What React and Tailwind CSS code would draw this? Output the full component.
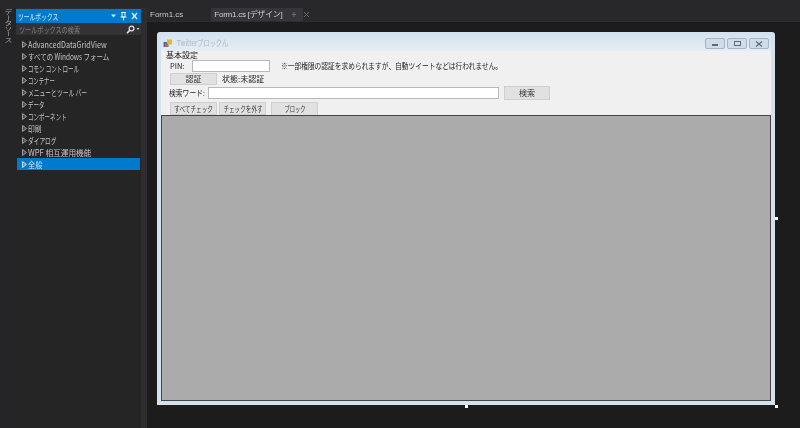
import React from 'react';

// the screenshot's UI font has narrow kana and full width kanji, so each label is squeezed on its own
const toolboxItems = [
  { label: 'AdvancedDataGridView', className: 'scale-x-[0.85]' },
  { label: 'すべての Windows フォーム', className: 'scale-x-[0.76]' },
  { label: 'コモン コントロール', className: 'scale-x-[0.65]' },
  { label: 'コンテナー', className: 'scale-x-[0.63]' },
  { label: 'メニューとツール バー', className: 'scale-x-[0.68]' },
  { label: 'データ', className: 'scale-x-[0.64]' },
  { label: 'コンポーネント', className: 'scale-x-[0.65]' },
  { label: '印刷', className: 'scale-x-[0.8]' },
  { label: 'ダイアログ', className: 'scale-x-[0.67]' },
  { label: 'WPF 相互運用機能', className: 'scale-x-[0.9]' },
];

const Arrow = ({ color = '#9c9c9c' }) => (
  <svg width="5" height="7" viewBox="0 0 5 7" className="shrink-0">
    <path d="M0.5 0.5 L4.5 3.5 L0.5 6.5 Z" fill={color} fillOpacity="0.35" stroke={color} strokeWidth="1" />
  </svg>
);

const ToolboxRow = ({ label, className, selected }) => (
  <div className={`flex h-3 items-center gap-[1px] pl-[5px] ${selected ? 'bg-[#007acc] text-[#cfe6f6]' : 'text-[#c4c4c4]'}`}>
    <Arrow color={selected ? '#bfe0f5' : '#9c9c9c'} />
    <span className={`origin-left whitespace-nowrap text-[8.5px] leading-3 ${className}`}>{label}</span>
  </div>
);

const Toolbox = () => (
  <div className="mt-[1px] flex w-[125px] shrink-0 flex-col">
    <div className="flex h-[14px] items-center bg-[#007acc] pl-[2px] pr-[3px] text-[#dcecf8]">
      <span className="flex-1 origin-left scale-x-[0.68] whitespace-nowrap text-[8.5px]">ツールボックス</span>
      <svg width="27" height="10" viewBox="0 0 27 10">
        <path d="M0 3.5 L5 3.5 L2.5 6.5 Z" fill="#dcecf8" />
        <path d="M10 1.5 H15 M11 1.5 V6 H14 V1.5 M9.5 6 H15.5 M12.5 6 V9.5" stroke="#e8f3fb" strokeWidth="1" fill="none" />
        <path d="M21 2 L26 8 M26 2 L21 8" stroke="#e8f3fb" strokeWidth="1.3" />
      </svg>
    </div>
    <div className="flex h-[12px] items-center justify-between bg-[#333337] pl-[3px] pr-[1px] text-[#808084]">
      <span className="origin-left scale-x-[0.72] whitespace-nowrap text-[8.5px]">ツールボックスの検索</span>
      <svg width="14" height="9" viewBox="0 0 14 9" className="shrink-0">
        <circle cx="5.5" cy="3.5" r="2.4" fill="none" stroke="#e4e4e4" strokeWidth="1.2" />
        <path d="M3.8 5.2 L1 8.2" stroke="#e4e4e4" strokeWidth="1.5" />
        <path d="M10.5 3 H13.5 L12 5 Z" fill="#d0d0d0" />
      </svg>
    </div>
    <div className="flex flex-1 flex-col bg-[#252526] pt-[3px]">
      <div className="flex flex-col px-[1px]">
        {toolboxItems.map((item) => (
          <ToolboxRow key={item.label} label={item.label} className={item.className} />
        ))}
        <ToolboxRow label="全般" className="scale-x-[0.85]" selected />
      </div>
    </div>
  </div>
);

const WinButton = ({ children }) => (
  <button className="flex h-[11px] w-[20px] items-center justify-center rounded-[2px] border border-[#a3b6c6] bg-[#d0dde9]">
    {children}
  </button>
);

const FormButton = ({ label, className = '', squeeze = '' }) => (
  <button className={`flex items-center justify-center border border-[#cfcfcf] bg-[#e1e1e1] text-[#333] ${className}`}>
    <span className={`whitespace-nowrap text-[8px] leading-[10px] ${squeeze}`}>{label}</span>
  </button>
);

const DesignerForm = () => (
  <div className="relative flex h-[373px] w-[618px] flex-col rounded-t-[3px] bg-[#d5e2ee] px-[4px] pb-[4px]">
    <div className="flex h-[19px] shrink-0 items-start bg-gradient-to-b from-[#d3e1ee] to-[#e6edf3] pl-[2px] pr-[2px] pt-[6px]">
      <svg width="10" height="9" viewBox="0 0 10 9" className="mt-[1px] shrink-0">
        <rect x="0.5" y="3" width="5" height="5" fill="#3f6fb5" />
        <rect x="4" y="0.5" width="5" height="5" fill="#e8b52e" />
        <rect x="2" y="5" width="3" height="3" fill="#d8622a" />
      </svg>
      <span className="ml-[4px] flex-1 origin-left scale-x-[0.77] whitespace-nowrap text-[8px] leading-[10px] text-[#a9b7c4]">Twitterブロックん</span>
      <div className="flex gap-[2px]">
        <WinButton><span className="mt-[2px] h-[2px] w-[6px] bg-[#5b6b78]" /></WinButton>
        <WinButton><span className="h-[5px] w-[7px] border border-[#5b6b78]" /></WinButton>
        <WinButton>
          <svg width="8" height="6" viewBox="0 0 8 6"><path d="M1 0.5 L7 5.5 M7 0.5 L1 5.5" stroke="#5b6b78" strokeWidth="1.2" /></svg>
        </WinButton>
      </div>
    </div>

    <div className="flex min-h-0 flex-1 flex-col bg-[#f0f0f0] text-[8px] text-[#222]">
      <div className="h-[9px] pl-[5px] leading-[8px]">基本設定</div>
      <div className="flex h-[12px] items-center pl-[9px]">
        <span className="w-[22px] text-[7.5px]">PIN:</span>
        <div className="h-[12px] w-[78px] shrink-0 border border-[#b8b8b8] bg-white" />
        <span className="ml-[11px] origin-left scale-x-[0.84] whitespace-nowrap">※一部権限の認証を求められますが、自動ツイートなどは行われません。</span>
      </div>
      <div className="mt-[1px] flex h-[12px] items-center pl-[9px]">
        <FormButton label="認証" className="h-[12px] w-[47px]" />
        <span className="ml-[5px] whitespace-nowrap">状態:未認証</span>
      </div>
      <div className="mt-[1px] flex h-[14px] items-center pl-[8px]">
        <span className="w-[39px] origin-left scale-x-[0.85] whitespace-nowrap">検索ワード:</span>
        <div className="h-[12px] w-[291px] border border-[#b8b8b8] bg-white" />
        <FormButton label="検索" className="ml-[5px] h-[14px] w-[46px]" />
      </div>
      <div className="mt-[2px] flex h-[13px] items-start pl-[9px]">
        <FormButton label="すべてチェック" squeeze="scale-x-[0.7]" className="h-[13px] w-[47px]" />
        <FormButton label="チェックを外す" squeeze="scale-x-[0.7]" className="ml-[2px] h-[13px] w-[47px]" />
        <FormButton label="ブロック" squeeze="scale-x-[0.66]" className="ml-[5px] h-[14px] w-[47px]" />
      </div>
      <div className="min-h-0 flex-1 border border-[#444] bg-[#ababab]" />
    </div>

    <span className="absolute right-[-3px] top-[185px] h-[3px] w-[3px] bg-white" />
    <span className="absolute bottom-[-3px] left-[308px] h-[3px] w-[3px] bg-white" />
    <span className="absolute bottom-[-3px] right-[-3px] h-[3px] w-[3px] bg-white" />
  </div>
);

export default function App() {
  return (
    <div
      className="flex h-[428px] w-[800px] flex-col overflow-hidden bg-[#2d2d30] blur-[0.4px]"
      style={{ fontFamily: '"Noto Sans CJK JP", "Noto Sans", sans-serif' }}
    >
      <div className="h-[8px] shrink-0 bg-[#28282b]" />
      <div className="flex min-h-0 flex-1">
        {/* side strip */}
        <div className="flex w-[16px] shrink-0 flex-col items-center bg-[#252528] pt-[1px]">
          <span className="origin-top scale-y-[0.7] text-[8px] leading-[10px] text-[#a0a0a0] [writing-mode:vertical-rl]">データソース</span>
        </div>
        <Toolbox />
        <div className="w-[6px] shrink-0 bg-[#2d2d30]" />

        {/* designer area */}
        <div className="flex min-w-0 flex-1 flex-col">
          <div className="flex h-[13px] shrink-0 items-center bg-[#28282b] text-[8px] [font-family:'Liberation_Sans','Noto_Sans_CJK_JP']">
            <span className="ml-[3px] text-[#c8c8c8]">Form1.cs</span>
            <div className="ml-[28px] flex h-[13px] w-[92px] items-center gap-[8px] bg-[#35353a] pl-[3px] text-[#d0d0d0]">
              <span className="whitespace-nowrap tracking-[-0.25px]">Form1.cs [デザイン]</span>
              <svg width="20" height="7" viewBox="0 0 20 7" className="shrink-0">
                <path d="M1 3.5 H5 M3 1 V6" stroke="#6c6c70" strokeWidth="1" />
                <path d="M13 1 L18 6 M18 1 L13 6" stroke="#6c6c70" strokeWidth="1" />
              </svg>
            </div>
          </div>
          <div className="h-[1px] shrink-0 bg-[#2d2d30]" />
          <div className="min-h-0 flex-1 bg-[#1c1c1d] pl-[10px] pt-[10px]">
            <DesignerForm />
          </div>
        </div>
      </div>
    </div>
  );
}
